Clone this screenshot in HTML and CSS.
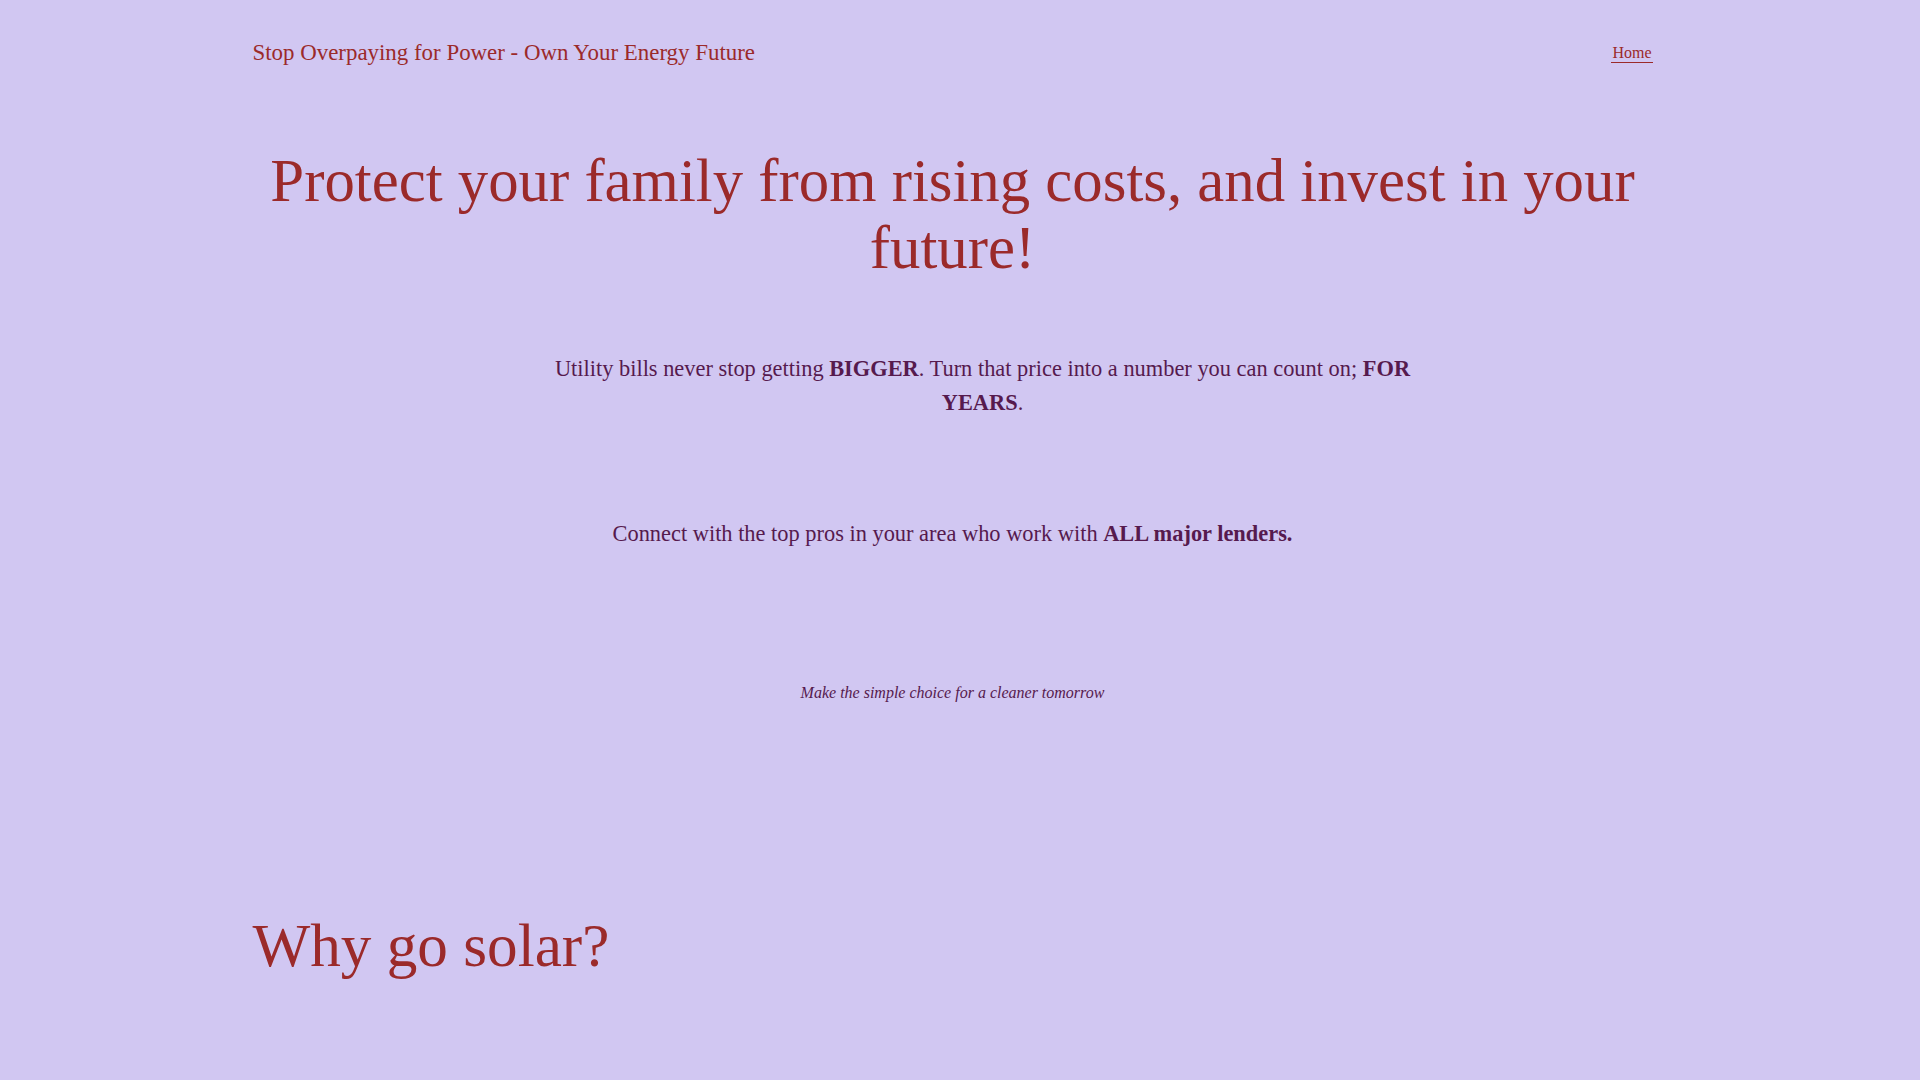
FILE: index.html
```html
<!DOCTYPE html>
<html lang="en">
    <head>
        <meta charset="UTF-8" />
        <title>Stop Overpaying for Power - Own Your Energy Future</title>

        <link rel="stylesheet" href="styles.css">
    </head>
    <body>
        <div class="okraj">
            <header class="hlavicka">
                <a class="nazev" href="#">Stop Overpaying for Power - Own Your Energy Future</a>
                <nav>
                    <a class="menu" href="#">Home</a>
                </nav>
            </header>

            <h1>Protect your family from rising costs, and invest in your future!</h1>

            <p class="lead">Utility bills never stop getting <strong>BIGGER</strong>. Turn that price into a number you can count on; <strong>FOR YEARS</strong>.</p>

            <p class="connect">Connect with the top pros in your area who work with <strong>ALL major lenders.</strong></p>

            <p class="tagline"><em>Make the simple choice for a cleaner tomorrow</em></p>

            <section class="why">
                <h2>Why go solar?</h2>

                <p>Lock in a low, predictable monthly payment instead of watching your utility rates climb every year.</p>
                <p>Increase the value of your home and qualify for federal and local incentives.</p>
                <p>Produce your own clean energy and lower your carbon footprint.</p>
            </section>

            <footer class="paticka">
                <p>Stop Overpaying for Power - Own Your Energy Future</p>
            </footer>
        </div>
    </body>
</html>
```

FILE: styles.css
```css
html {
    background-color: #d1c7f2;
}

body {
    margin: 0;
    padding-right: 15px;
    font-family: "Liberation Serif", "Times New Roman", serif;
    font-size: 16px;
    line-height: 1.5;
    color: #561a4e;
}

.okraj {
    max-width: 1400px;
    margin: 0 auto;
}

.hlavicka {
    display: flex;
    justify-content: space-between;
    align-items: center;
    padding-top: 36px;
}

.nazev {
    font-size: 22.9px;
    color: #9b2a2a;
    text-decoration: none;
}

.menu {
    font-size: 16px;
    color: #9b2a2a;
    text-decoration: none;
    padding: 0 1px 1px;
    border-bottom: 1px solid #9b2a2a;
}

h1, h2 {
    font-size: 3.8rem;
    font-weight: normal;
    line-height: 1.1;
    color: #9b2a2a;
}

h1 {
    text-align: center;
    margin: 78px 0 0;
}

.lead, .connect {
    font-size: 22.4px;
    text-align: center;
}

.lead {
    max-width: 880px;
    margin: 70px auto 0;
    padding-left: 60px;
}

.connect {
    margin: 98px 0 0;
}

.tagline {
    text-align: center;
    margin: 130px 0 0;
}

.why {
    min-height: 3000px;
}

.why h2 {
    font-size: 61.2px;
    margin: 207px 0 260px;
}

.why p {
    font-size: 22.4px;
    max-width: 880px;
}

.paticka {
    padding: 40px 0 60px;
    text-align: center;
}
```
